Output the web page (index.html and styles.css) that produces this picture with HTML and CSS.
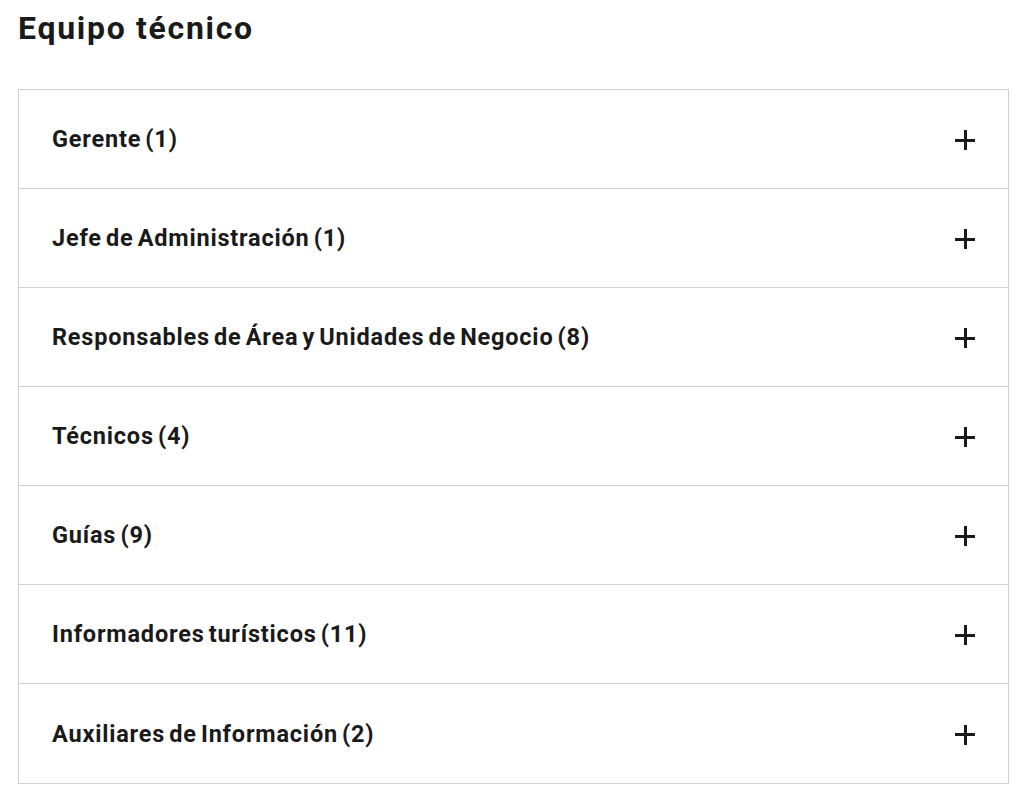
FILE: index.html
```html
<!DOCTYPE html>
<html lang="es">
  <head>
    <meta charset="UTF-8" />
    <title>Equipo técnico</title>
    <link rel="stylesheet" href="styles.css">
  </head>
  <body>
    <section class="team">
      <h2 class="team-title">Equipo técnico</h2>

      <div class="accordion">
        <div class="accordion-item">
          <span class="accordion-label">Gerente (1)</span>
          <span class="accordion-plus"></span>
        </div>
        <div class="accordion-item">
          <span class="accordion-label">Jefe de Administración (1)</span>
          <span class="accordion-plus"></span>
        </div>
        <div class="accordion-item">
          <span class="accordion-label">Responsables de Área y Unidades de Negocio (8)</span>
          <span class="accordion-plus"></span>
        </div>
        <div class="accordion-item">
          <span class="accordion-label">Técnicos (4)</span>
          <span class="accordion-plus"></span>
        </div>
        <div class="accordion-item">
          <span class="accordion-label">Guías (9)</span>
          <span class="accordion-plus"></span>
        </div>
        <div class="accordion-item">
          <span class="accordion-label">Informadores turísticos (11)</span>
          <span class="accordion-plus"></span>
        </div>
        <div class="accordion-item">
          <span class="accordion-label">Auxiliares de Información (2)</span>
          <span class="accordion-plus"></span>
        </div>
      </div>
    </section>
  </body>
</html>
```

FILE: styles.css
```css
* {
  padding: 0;
  margin: 0;
  box-sizing: border-box;
}

body {
  font-family: Roboto, "Liberation Sans", sans-serif;
  background: #fff;
  color: #1a1a1a;
}

.team {
  padding: 8px 15px 0 18px;
}

.team-title {
  font-size: 32px;
  font-weight: 700;
  line-height: 40px;
  letter-spacing: 1.7px;
  margin-bottom: 41px;
}

.accordion {
  border: 1px solid #cfcfcf;
}

.accordion-item {
  display: flex;
  align-items: center;
  justify-content: space-between;
  height: 99px;
  padding: 0 33px 0 33px;
  border-bottom: 1px solid #cfcfcf;
}

.accordion-item:last-child {
  border-bottom: none;
}

.accordion-label {
  font-size: 23.5px;
  font-weight: 700;
  letter-spacing: 0.8px;
  word-spacing: -2.5px;
}

/* plus icon drawn with two bars */
.accordion-plus {
  position: relative;
  width: 20px;
  height: 20px;
  margin-top: 2px;
}

.accordion-plus::before,
.accordion-plus::after {
  content: "";
  position: absolute;
  background: #1a1a1a;
}

.accordion-plus::before {
  left: 0;
  top: 8.5px;
  width: 20px;
  height: 3px;
}

.accordion-plus::after {
  left: 8.5px;
  top: 0;
  width: 3px;
  height: 20px;
}
```
